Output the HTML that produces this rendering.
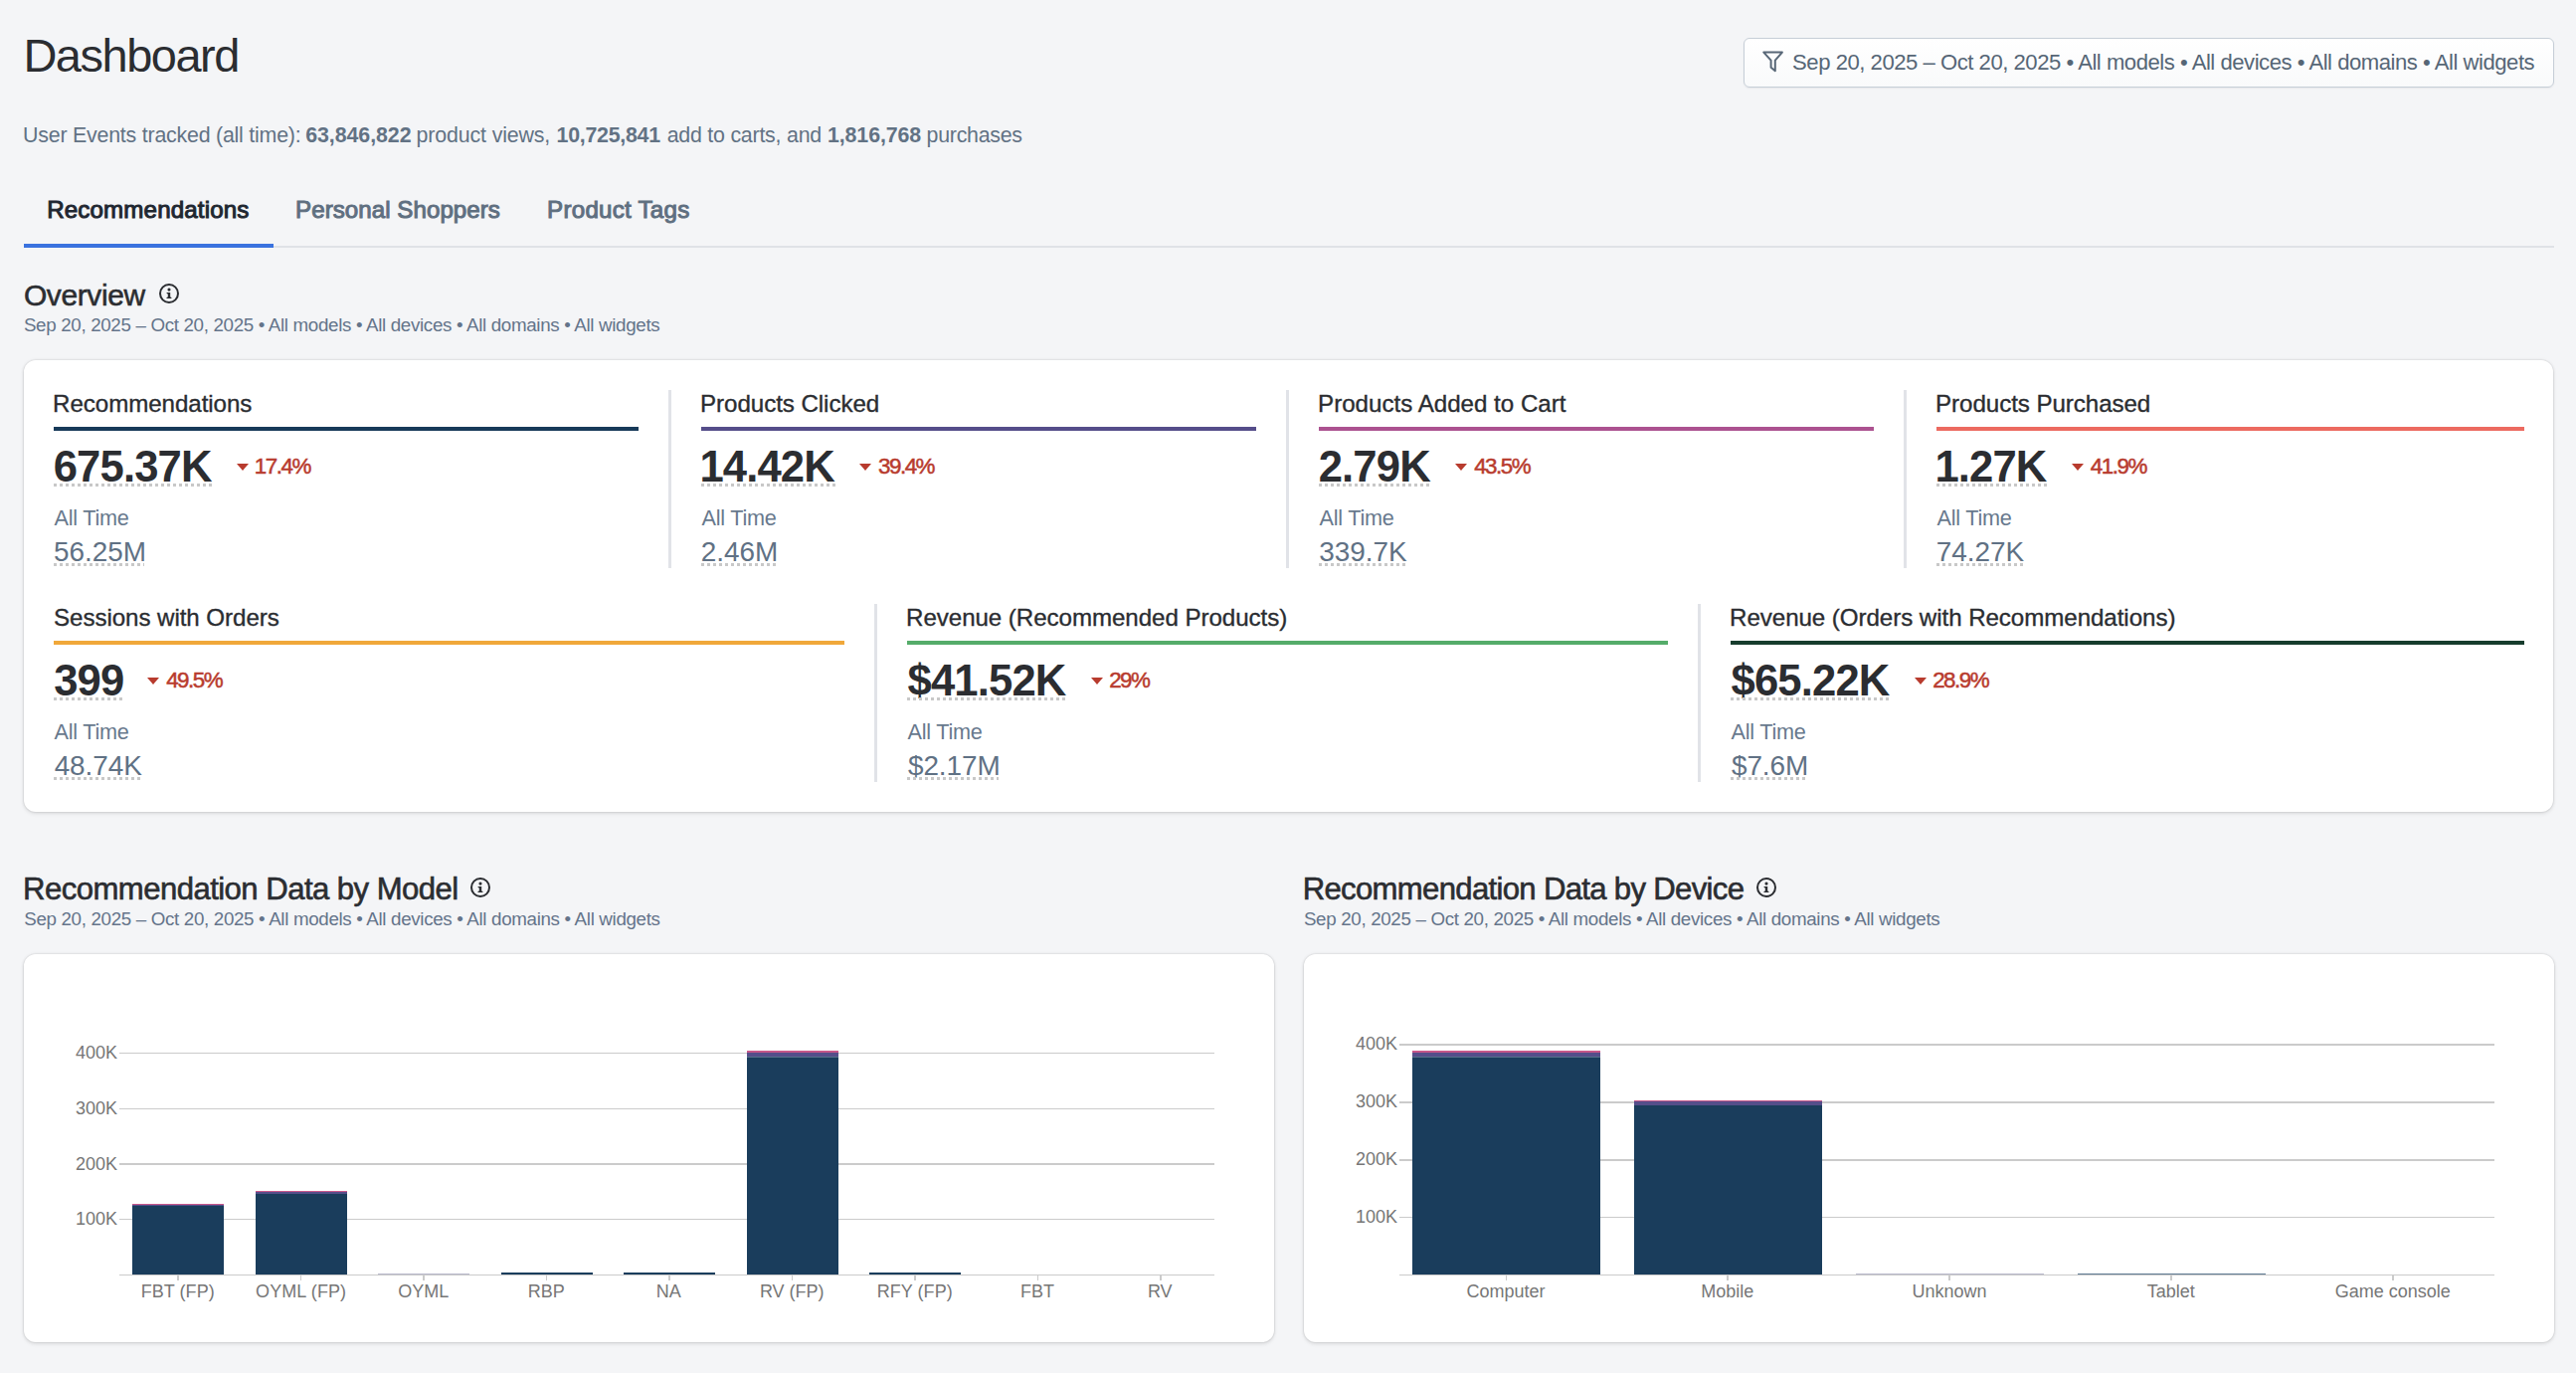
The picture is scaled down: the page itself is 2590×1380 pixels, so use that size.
<!DOCTYPE html>
<html><head><meta charset="utf-8"><title>Dashboard</title>
<style>
html,body{margin:0;padding:0;}
body{width:2590px;height:1380px;overflow:hidden;position:relative;background:#f4f5f7;font-family:"Liberation Sans",sans-serif;}
</style></head><body>
<div class="t" style="position:absolute;left:23.44px;top:32.69px;font-size:46.95px;line-height:46.95px;font-weight:400;letter-spacing:-1.467px;color:#2b2d31;white-space:nowrap">Dashboard</div>
<div class="t" style="position:absolute;left:23.10px;top:126.44px;font-size:21.37px;line-height:21.37px;font-weight:400;letter-spacing:-0.216px;color:#627284;white-space:nowrap">User Events tracked (all time):</div>
<div class="t" style="position:absolute;left:307.16px;top:126.44px;font-size:21.37px;line-height:21.37px;font-weight:700;letter-spacing:-0.056px;color:#627284;white-space:nowrap">63,846,822</div>
<div class="t" style="position:absolute;left:418.62px;top:126.44px;font-size:21.37px;line-height:21.37px;font-weight:400;letter-spacing:-0.144px;color:#627284;white-space:nowrap">product views,</div>
<div class="t" style="position:absolute;left:559.52px;top:126.44px;font-size:21.37px;line-height:21.37px;font-weight:700;letter-spacing:-0.264px;color:#627284;white-space:nowrap">10,725,841</div>
<div class="t" style="position:absolute;left:670.65px;top:126.44px;font-size:21.37px;line-height:21.37px;font-weight:400;letter-spacing:-0.223px;color:#627284;white-space:nowrap">add to carts, and</div>
<div class="t" style="position:absolute;left:832.02px;top:126.44px;font-size:21.37px;line-height:21.37px;font-weight:700;letter-spacing:-0.112px;color:#627284;white-space:nowrap">1,816,768</div>
<div class="t" style="position:absolute;left:931.62px;top:126.44px;font-size:21.37px;line-height:21.37px;font-weight:400;letter-spacing:-0.279px;color:#627284;white-space:nowrap">purchases</div>
<div style="position:absolute;left:1753px;top:38px;width:815px;height:50px;box-sizing:border-box;border:1.5px solid #c6ced7;border-radius:6px;background:linear-gradient(#ffffff,#f9fafb);box-shadow:0 1px 2px rgba(16,24,40,0.06)"></div>
<svg style="position:absolute;left:1770px;top:50px" width="26" height="25" viewBox="0 0 26 25"><path d="M3.3 2.6 H21.9 L14.8 10.6 V21.3 L10.6 17.8 V10.6 Z" fill="none" stroke="#586777" stroke-width="2" stroke-linejoin="round"/></svg>
<div class="t" style="position:absolute;left:1802.12px;top:51.82px;font-size:22.09px;line-height:22.09px;font-weight:400;letter-spacing:-0.469px;color:#566676;white-space:nowrap">Sep 20, 2025 – Oct 20, 2025 • All models • All devices • All domains • All widgets</div>
<div style="position:absolute;left:24.00px;top:247.00px;width:2544.00px;height:2.00px;background:#dfe2e7;"></div>
<div style="position:absolute;left:24.00px;top:245.00px;width:251.00px;height:4.00px;background:#3a72df;"></div>
<div class="t" style="position:absolute;left:47.17px;top:199.19px;font-size:24.13px;line-height:24.13px;font-weight:400;letter-spacing:0.151px;color:#1f2731;-webkit-text-stroke:1.0px #1f2731;white-space:nowrap">Recommendations</div>
<div class="t" style="position:absolute;left:297.07px;top:199.19px;font-size:24.13px;line-height:24.13px;font-weight:400;letter-spacing:0.041px;color:#5f6f80;-webkit-text-stroke:1.0px #5f6f80;white-space:nowrap">Personal Shoppers</div>
<div class="t" style="position:absolute;left:550.07px;top:199.19px;font-size:24.13px;line-height:24.13px;font-weight:400;letter-spacing:0.258px;color:#5f6f80;-webkit-text-stroke:1.0px #5f6f80;white-space:nowrap">Product Tags</div>
<div class="t" style="position:absolute;left:23.90px;top:282.15px;font-size:29.94px;line-height:29.94px;font-weight:400;letter-spacing:-0.358px;color:#2b2d31;-webkit-text-stroke:0.55px #2b2d31;white-space:nowrap">Overview</div>
<svg style="position:absolute;left:158.50px;top:284.20px" width="22" height="22" viewBox="-11 -11 22 22"><circle cx="0" cy="0" r="9" fill="none" stroke="#2b2d31" stroke-width="2"/><circle cx="0" cy="-3.9" r="1.55" fill="#2b2d31"/><path d="M-2.4 -1.0 H1.2 V3.5 L2.4 4.1 V5.1 H-2.5 V4.1 L-1.2 3.5 V0.5 L-2.4 0.1 Z" fill="#2b2d31"/></svg>
<div class="t" style="position:absolute;left:23.95px;top:317.66px;font-size:18.75px;line-height:18.75px;font-weight:400;letter-spacing:-0.327px;color:#64748a;white-space:nowrap">Sep 20, 2025 – Oct 20, 2025 • All models • All devices • All domains • All widgets</div>
<div style="position:absolute;left:24px;top:362px;width:2543px;height:454px;background:#fff;border-radius:12px;box-shadow:0 0 0 1px rgba(0,0,0,0.03),0 0 3px 1px rgba(0,0,0,0.05),0 2px 4px rgba(0,0,0,0.09)"></div>
<div style="position:absolute;left:672.00px;top:392.00px;width:3.00px;height:179.00px;background:#e1e3e8;"></div>
<div style="position:absolute;left:1293.00px;top:392.00px;width:3.00px;height:179.00px;background:#e1e3e8;"></div>
<div style="position:absolute;left:1914.00px;top:392.00px;width:3.00px;height:179.00px;background:#e1e3e8;"></div>
<div style="position:absolute;left:879.00px;top:607.00px;width:3.00px;height:179.00px;background:#e1e3e8;"></div>
<div style="position:absolute;left:1707.00px;top:607.00px;width:3.00px;height:179.00px;background:#e1e3e8;"></div>
<div class="t" style="position:absolute;left:53.07px;top:394.09px;font-size:24.13px;line-height:24.13px;font-weight:400;letter-spacing:-0.061px;color:#2b2d31;-webkit-text-stroke:0.35px #2b2d31;white-space:nowrap">Recommendations</div>
<div style="position:absolute;left:54.00px;top:429.00px;width:588.00px;height:4.00px;background:#173a59;"></div>
<div class="t" style="position:absolute;left:53.69px;top:447.54px;font-size:43.60px;line-height:43.60px;font-weight:700;letter-spacing:-0.837px;color:#2b2d31;white-space:nowrap">675.37K</div>
<div style="position:absolute;left:54.00px;top:486.00px;width:159.40px;height:3.00px;background:repeating-linear-gradient(to right,#c8c8c8 0,#c8c8c8 3px,transparent 3px,transparent 6px);"></div>
<svg style="position:absolute;left:237.90px;top:466.30px" width="12" height="7" viewBox="0 0 12 7"><path d="M0 0 H12 L6 7 Z" fill="#b83b2e"/></svg>
<div class="t" style="position:absolute;left:255.83px;top:457.87px;font-size:22.38px;line-height:22.38px;font-weight:400;letter-spacing:-1.482px;color:#b83b2e;-webkit-text-stroke:0.5px #b83b2e;white-space:nowrap">17.4%</div>
<div class="t" style="position:absolute;left:54.60px;top:510.19px;font-size:21.66px;line-height:21.66px;font-weight:400;letter-spacing:-0.254px;color:#68798d;white-space:nowrap">All Time</div>
<div class="t" style="position:absolute;left:54.08px;top:540.88px;font-size:27.91px;line-height:27.91px;font-weight:400;letter-spacing:-0.048px;color:#607184;white-space:nowrap">56.25M</div>
<div style="position:absolute;left:54.00px;top:566.00px;width:90.90px;height:3.00px;background:repeating-linear-gradient(to right,#c8c8c8 0,#c8c8c8 3px,transparent 3px,transparent 6px);"></div>
<div class="t" style="position:absolute;left:704.07px;top:394.09px;font-size:24.13px;line-height:24.13px;font-weight:400;letter-spacing:-0.061px;color:#2b2d31;-webkit-text-stroke:0.35px #2b2d31;white-space:nowrap">Products Clicked</div>
<div style="position:absolute;left:705.00px;top:429.00px;width:558.00px;height:4.00px;background:#554d8a;"></div>
<div class="t" style="position:absolute;left:703.38px;top:447.54px;font-size:43.60px;line-height:43.60px;font-weight:700;letter-spacing:-0.838px;color:#2b2d31;white-space:nowrap">14.42K</div>
<div style="position:absolute;left:705.00px;top:486.00px;width:134.68px;height:3.00px;background:repeating-linear-gradient(to right,#c8c8c8 0,#c8c8c8 3px,transparent 3px,transparent 6px);"></div>
<svg style="position:absolute;left:864.18px;top:466.30px" width="12" height="7" viewBox="0 0 12 7"><path d="M0 0 H12 L6 7 Z" fill="#b83b2e"/></svg>
<div class="t" style="position:absolute;left:883.01px;top:457.87px;font-size:22.38px;line-height:22.38px;font-weight:400;letter-spacing:-1.482px;color:#b83b2e;-webkit-text-stroke:0.5px #b83b2e;white-space:nowrap">39.4%</div>
<div class="t" style="position:absolute;left:705.60px;top:510.19px;font-size:21.66px;line-height:21.66px;font-weight:400;letter-spacing:-0.254px;color:#68798d;white-space:nowrap">All Time</div>
<div class="t" style="position:absolute;left:704.80px;top:540.88px;font-size:27.91px;line-height:27.91px;font-weight:400;letter-spacing:-0.046px;color:#607184;white-space:nowrap">2.46M</div>
<div style="position:absolute;left:705.00px;top:566.00px;width:75.15px;height:3.00px;background:repeating-linear-gradient(to right,#c8c8c8 0,#c8c8c8 3px,transparent 3px,transparent 6px);"></div>
<div class="t" style="position:absolute;left:1325.07px;top:394.09px;font-size:24.13px;line-height:24.13px;font-weight:400;letter-spacing:0.001px;color:#2b2d31;-webkit-text-stroke:0.35px #2b2d31;white-space:nowrap">Products Added to Cart</div>
<div style="position:absolute;left:1326.00px;top:429.00px;width:558.00px;height:4.00px;background:#ac5290;"></div>
<div class="t" style="position:absolute;left:1325.69px;top:447.54px;font-size:43.60px;line-height:43.60px;font-weight:700;letter-spacing:-0.839px;color:#2b2d31;white-space:nowrap">2.79K</div>
<div style="position:absolute;left:1326.00px;top:486.00px;width:112.58px;height:3.00px;background:repeating-linear-gradient(to right,#c8c8c8 0,#c8c8c8 3px,transparent 3px,transparent 6px);"></div>
<svg style="position:absolute;left:1463.08px;top:466.30px" width="12" height="7" viewBox="0 0 12 7"><path d="M0 0 H12 L6 7 Z" fill="#b83b2e"/></svg>
<div class="t" style="position:absolute;left:1482.14px;top:457.87px;font-size:22.38px;line-height:22.38px;font-weight:400;letter-spacing:-1.482px;color:#b83b2e;-webkit-text-stroke:0.5px #b83b2e;white-space:nowrap">43.5%</div>
<div class="t" style="position:absolute;left:1326.60px;top:510.19px;font-size:21.66px;line-height:21.66px;font-weight:400;letter-spacing:-0.254px;color:#68798d;white-space:nowrap">All Time</div>
<div class="t" style="position:absolute;left:1326.36px;top:540.88px;font-size:27.91px;line-height:27.91px;font-weight:400;letter-spacing:-0.045px;color:#607184;white-space:nowrap">339.7K</div>
<div style="position:absolute;left:1326.00px;top:566.00px;width:88.39px;height:3.00px;background:repeating-linear-gradient(to right,#c8c8c8 0,#c8c8c8 3px,transparent 3px,transparent 6px);"></div>
<div class="t" style="position:absolute;left:1946.07px;top:394.09px;font-size:24.13px;line-height:24.13px;font-weight:400;letter-spacing:-0.060px;color:#2b2d31;-webkit-text-stroke:0.35px #2b2d31;white-space:nowrap">Products Purchased</div>
<div style="position:absolute;left:1947.00px;top:429.00px;width:591.00px;height:4.00px;background:#ec6a60;"></div>
<div class="t" style="position:absolute;left:1945.38px;top:447.54px;font-size:43.60px;line-height:43.60px;font-weight:700;letter-spacing:-0.839px;color:#2b2d31;white-space:nowrap">1.27K</div>
<div style="position:absolute;left:1947.00px;top:486.00px;width:111.28px;height:3.00px;background:repeating-linear-gradient(to right,#c8c8c8 0,#c8c8c8 3px,transparent 3px,transparent 6px);"></div>
<svg style="position:absolute;left:2082.78px;top:466.30px" width="12" height="7" viewBox="0 0 12 7"><path d="M0 0 H12 L6 7 Z" fill="#b83b2e"/></svg>
<div class="t" style="position:absolute;left:2101.83px;top:457.87px;font-size:22.38px;line-height:22.38px;font-weight:400;letter-spacing:-1.482px;color:#b83b2e;-webkit-text-stroke:0.5px #b83b2e;white-space:nowrap">41.9%</div>
<div class="t" style="position:absolute;left:1947.60px;top:510.19px;font-size:21.66px;line-height:21.66px;font-weight:400;letter-spacing:-0.254px;color:#68798d;white-space:nowrap">All Time</div>
<div class="t" style="position:absolute;left:1946.80px;top:540.88px;font-size:27.91px;line-height:27.91px;font-weight:400;letter-spacing:-0.045px;color:#607184;white-space:nowrap">74.27K</div>
<div style="position:absolute;left:1947.00px;top:566.00px;width:87.83px;height:3.00px;background:repeating-linear-gradient(to right,#c8c8c8 0,#c8c8c8 3px,transparent 3px,transparent 6px);"></div>
<div class="t" style="position:absolute;left:54.03px;top:609.09px;font-size:24.13px;line-height:24.13px;font-weight:400;letter-spacing:-0.060px;color:#2b2d31;-webkit-text-stroke:0.35px #2b2d31;white-space:nowrap">Sessions with Orders</div>
<div style="position:absolute;left:54.00px;top:644.00px;width:795.00px;height:4.00px;background:#f0a83a;"></div>
<div class="t" style="position:absolute;left:54.13px;top:662.54px;font-size:43.60px;line-height:43.60px;font-weight:700;letter-spacing:-0.842px;color:#2b2d31;white-space:nowrap">399</div>
<div style="position:absolute;left:54.00px;top:701.00px;width:69.62px;height:3.00px;background:repeating-linear-gradient(to right,#c8c8c8 0,#c8c8c8 3px,transparent 3px,transparent 6px);"></div>
<svg style="position:absolute;left:148.12px;top:681.30px" width="12" height="7" viewBox="0 0 12 7"><path d="M0 0 H12 L6 7 Z" fill="#b83b2e"/></svg>
<div class="t" style="position:absolute;left:167.17px;top:672.87px;font-size:22.38px;line-height:22.38px;font-weight:400;letter-spacing:-1.482px;color:#b83b2e;-webkit-text-stroke:0.5px #b83b2e;white-space:nowrap">49.5%</div>
<div class="t" style="position:absolute;left:54.60px;top:725.19px;font-size:21.66px;line-height:21.66px;font-weight:400;letter-spacing:-0.254px;color:#68798d;white-space:nowrap">All Time</div>
<div class="t" style="position:absolute;left:54.64px;top:755.88px;font-size:27.91px;line-height:27.91px;font-weight:400;letter-spacing:-0.045px;color:#607184;white-space:nowrap">48.74K</div>
<div style="position:absolute;left:54.00px;top:781.00px;width:88.67px;height:3.00px;background:repeating-linear-gradient(to right,#c8c8c8 0,#c8c8c8 3px,transparent 3px,transparent 6px);"></div>
<div class="t" style="position:absolute;left:911.07px;top:609.09px;font-size:24.13px;line-height:24.13px;font-weight:400;letter-spacing:-0.059px;color:#2b2d31;-webkit-text-stroke:0.35px #2b2d31;white-space:nowrap">Revenue (Recommended Products)</div>
<div style="position:absolute;left:912.00px;top:644.00px;width:765.00px;height:4.00px;background:#55ac6a;"></div>
<div class="t" style="position:absolute;left:912.56px;top:662.54px;font-size:43.60px;line-height:43.60px;font-weight:700;letter-spacing:-0.837px;color:#2b2d31;white-space:nowrap">$41.52K</div>
<div style="position:absolute;left:912.00px;top:701.00px;width:160.27px;height:3.00px;background:repeating-linear-gradient(to right,#c8c8c8 0,#c8c8c8 3px,transparent 3px,transparent 6px);"></div>
<svg style="position:absolute;left:1096.77px;top:681.30px" width="12" height="7" viewBox="0 0 12 7"><path d="M0 0 H12 L6 7 Z" fill="#b83b2e"/></svg>
<div class="t" style="position:absolute;left:1115.15px;top:672.87px;font-size:22.38px;line-height:22.38px;font-weight:400;letter-spacing:-1.481px;color:#b83b2e;-webkit-text-stroke:0.5px #b83b2e;white-space:nowrap">29%</div>
<div class="t" style="position:absolute;left:912.60px;top:725.19px;font-size:21.66px;line-height:21.66px;font-weight:400;letter-spacing:-0.254px;color:#68798d;white-space:nowrap">All Time</div>
<div class="t" style="position:absolute;left:912.92px;top:755.88px;font-size:27.91px;line-height:27.91px;font-weight:400;letter-spacing:-0.048px;color:#607184;white-space:nowrap">$2.17M</div>
<div style="position:absolute;left:912.00px;top:781.00px;width:91.74px;height:3.00px;background:repeating-linear-gradient(to right,#c8c8c8 0,#c8c8c8 3px,transparent 3px,transparent 6px);"></div>
<div class="t" style="position:absolute;left:1739.07px;top:609.09px;font-size:24.13px;line-height:24.13px;font-weight:400;letter-spacing:-0.060px;color:#2b2d31;-webkit-text-stroke:0.35px #2b2d31;white-space:nowrap">Revenue (Orders with Recommendations)</div>
<div style="position:absolute;left:1740.00px;top:644.00px;width:798.00px;height:4.00px;background:#173d2d;"></div>
<div class="t" style="position:absolute;left:1740.56px;top:662.54px;font-size:43.60px;line-height:43.60px;font-weight:700;letter-spacing:-0.837px;color:#2b2d31;white-space:nowrap">$65.22K</div>
<div style="position:absolute;left:1740.00px;top:701.00px;width:160.27px;height:3.00px;background:repeating-linear-gradient(to right,#c8c8c8 0,#c8c8c8 3px,transparent 3px,transparent 6px);"></div>
<svg style="position:absolute;left:1924.77px;top:681.30px" width="12" height="7" viewBox="0 0 12 7"><path d="M0 0 H12 L6 7 Z" fill="#b83b2e"/></svg>
<div class="t" style="position:absolute;left:1943.15px;top:672.87px;font-size:22.38px;line-height:22.38px;font-weight:400;letter-spacing:-1.482px;color:#b83b2e;-webkit-text-stroke:0.5px #b83b2e;white-space:nowrap">28.9%</div>
<div class="t" style="position:absolute;left:1740.60px;top:725.19px;font-size:21.66px;line-height:21.66px;font-weight:400;letter-spacing:-0.254px;color:#68798d;white-space:nowrap">All Time</div>
<div class="t" style="position:absolute;left:1740.92px;top:755.88px;font-size:27.91px;line-height:27.91px;font-weight:400;letter-spacing:-0.046px;color:#607184;white-space:nowrap">$7.6M</div>
<div style="position:absolute;left:1740.00px;top:781.00px;width:76.26px;height:3.00px;background:repeating-linear-gradient(to right,#c8c8c8 0,#c8c8c8 3px,transparent 3px,transparent 6px);"></div>
<div class="t" style="position:absolute;left:23.01px;top:878.46px;font-size:31.10px;line-height:31.10px;font-weight:400;letter-spacing:-0.541px;color:#2b2d31;-webkit-text-stroke:0.6px #2b2d31;white-space:nowrap">Recommendation Data by Model</div>
<svg style="position:absolute;left:472.10px;top:881.30px" width="22" height="22" viewBox="-11 -11 22 22"><circle cx="0" cy="0" r="9" fill="none" stroke="#2b2d31" stroke-width="2"/><circle cx="0" cy="-3.9" r="1.55" fill="#2b2d31"/><path d="M-2.4 -1.0 H1.2 V3.5 L2.4 4.1 V5.1 H-2.5 V4.1 L-1.2 3.5 V0.5 L-2.4 0.1 Z" fill="#2b2d31"/></svg>
<div class="t" style="position:absolute;left:24.25px;top:914.66px;font-size:18.75px;line-height:18.75px;font-weight:400;letter-spacing:-0.327px;color:#64748a;white-space:nowrap">Sep 20, 2025 – Oct 20, 2025 • All models • All devices • All domains • All widgets</div>
<div style="position:absolute;left:24px;top:959px;width:1257px;height:390px;background:#fff;border-radius:12px;box-shadow:0 0 0 1px rgba(0,0,0,0.03),0 0 3px 1px rgba(0,0,0,0.05),0 2px 4px rgba(0,0,0,0.09)"></div>
<div style="position:absolute;left:120.00px;top:1057.90px;width:1101.00px;height:1.60px;background:#cbcbcb;"></div>
<div class="t" style="position:absolute;left:76.09px;top:1049.10px;font-size:18.00px;line-height:18.00px;font-weight:400;letter-spacing:-0.001px;color:#767676;white-space:nowrap">400K</div>
<div style="position:absolute;left:120.00px;top:1113.60px;width:1101.00px;height:1.60px;background:#cbcbcb;"></div>
<div class="t" style="position:absolute;left:76.09px;top:1104.80px;font-size:18.00px;line-height:18.00px;font-weight:400;letter-spacing:-0.001px;color:#767676;white-space:nowrap">300K</div>
<div style="position:absolute;left:120.00px;top:1169.30px;width:1101.00px;height:1.60px;background:#cbcbcb;"></div>
<div class="t" style="position:absolute;left:76.09px;top:1160.50px;font-size:18.00px;line-height:18.00px;font-weight:400;letter-spacing:-0.001px;color:#767676;white-space:nowrap">200K</div>
<div style="position:absolute;left:120.00px;top:1224.90px;width:1101.00px;height:1.60px;background:#cbcbcb;"></div>
<div class="t" style="position:absolute;left:76.09px;top:1216.10px;font-size:18.00px;line-height:18.00px;font-weight:400;letter-spacing:-0.001px;color:#767676;white-space:nowrap">100K</div>
<div style="position:absolute;left:120.00px;top:1280.70px;width:1101.00px;height:1.60px;background:#cbcbcb;"></div>
<div style="position:absolute;left:178.25px;top:1281.20px;width:1.50px;height:6.00px;background:#cbcbcb;"></div>
<div class="t" style="position:absolute;left:141.76px;top:1288.50px;font-size:18.00px;line-height:18.00px;font-weight:400;letter-spacing:0.041px;color:#767676;white-space:nowrap">FBT (FP)</div>
<div style="position:absolute;left:301.75px;top:1281.20px;width:1.50px;height:6.00px;background:#cbcbcb;"></div>
<div class="t" style="position:absolute;left:257.12px;top:1288.50px;font-size:18.00px;line-height:18.00px;font-weight:400;letter-spacing:0.074px;color:#767676;white-space:nowrap">OYML (FP)</div>
<div style="position:absolute;left:425.25px;top:1281.20px;width:1.50px;height:6.00px;background:#cbcbcb;"></div>
<div class="t" style="position:absolute;left:400.37px;top:1288.50px;font-size:18.00px;line-height:18.00px;font-weight:400;letter-spacing:-0.002px;color:#767676;white-space:nowrap">OYML</div>
<div style="position:absolute;left:548.75px;top:1281.20px;width:1.50px;height:6.00px;background:#cbcbcb;"></div>
<div class="t" style="position:absolute;left:530.70px;top:1288.50px;font-size:18.00px;line-height:18.00px;font-weight:400;letter-spacing:-0.005px;color:#767676;white-space:nowrap">RBP</div>
<div style="position:absolute;left:672.25px;top:1281.20px;width:1.50px;height:6.00px;background:#cbcbcb;"></div>
<div class="t" style="position:absolute;left:659.75px;top:1288.50px;font-size:18.00px;line-height:18.00px;font-weight:400;letter-spacing:-0.001px;color:#767676;white-space:nowrap">NA</div>
<div style="position:absolute;left:795.75px;top:1281.20px;width:1.50px;height:6.00px;background:#cbcbcb;"></div>
<div class="t" style="position:absolute;left:763.92px;top:1288.50px;font-size:18.00px;line-height:18.00px;font-weight:400;letter-spacing:-0.002px;color:#767676;white-space:nowrap">RV (FP)</div>
<div style="position:absolute;left:919.25px;top:1281.20px;width:1.50px;height:6.00px;background:#cbcbcb;"></div>
<div class="t" style="position:absolute;left:881.76px;top:1288.50px;font-size:18.00px;line-height:18.00px;font-weight:400;letter-spacing:0.040px;color:#767676;white-space:nowrap">RFY (FP)</div>
<div style="position:absolute;left:1042.75px;top:1281.20px;width:1.50px;height:6.00px;background:#cbcbcb;"></div>
<div class="t" style="position:absolute;left:1025.97px;top:1288.50px;font-size:18.00px;line-height:18.00px;font-weight:400;letter-spacing:-0.003px;color:#767676;white-space:nowrap">FBT</div>
<div style="position:absolute;left:1166.25px;top:1281.20px;width:1.50px;height:6.00px;background:#cbcbcb;"></div>
<div class="t" style="position:absolute;left:1153.91px;top:1288.50px;font-size:18.00px;line-height:18.00px;font-weight:400;letter-spacing:0.000px;color:#767676;white-space:nowrap">RV</div>
<div style="position:absolute;left:133.00px;top:1210.40px;width:92.00px;height:1.00px;background:#c8588a;"></div>
<div style="position:absolute;left:133.00px;top:1211.40px;width:92.00px;height:0.60px;background:#554e8a;"></div>
<div style="position:absolute;left:133.00px;top:1212.00px;width:92.00px;height:69.20px;background:#1a3d5c;"></div>
<div style="position:absolute;left:256.50px;top:1197.10px;width:92.00px;height:0.90px;background:#c8588a;"></div>
<div style="position:absolute;left:256.50px;top:1198.00px;width:92.00px;height:2.00px;background:#554e8a;"></div>
<div style="position:absolute;left:256.50px;top:1200.00px;width:92.00px;height:81.20px;background:#1a3d5c;"></div>
<div style="position:absolute;left:380.00px;top:1280.20px;width:92.00px;height:1.00px;background:#b9b9cc;"></div>
<div style="position:absolute;left:503.50px;top:1279.20px;width:92.00px;height:2.00px;background:#1a3d5c;"></div>
<div style="position:absolute;left:627.00px;top:1279.20px;width:92.00px;height:2.00px;background:#1a3d5c;"></div>
<div style="position:absolute;left:750.50px;top:1056.30px;width:92.00px;height:1.70px;background:#c8588a;"></div>
<div style="position:absolute;left:750.50px;top:1058.00px;width:92.00px;height:4.00px;background:#554e8a;"></div>
<div style="position:absolute;left:750.50px;top:1062.00px;width:92.00px;height:1.00px;background:#55708a;"></div>
<div style="position:absolute;left:750.50px;top:1063.00px;width:92.00px;height:218.20px;background:#1a3d5c;"></div>
<div style="position:absolute;left:874.00px;top:1279.20px;width:92.00px;height:2.00px;background:#1a3d5c;"></div>
<div class="t" style="position:absolute;left:1309.71px;top:878.46px;font-size:31.10px;line-height:31.10px;font-weight:400;letter-spacing:-0.677px;color:#2b2d31;-webkit-text-stroke:0.6px #2b2d31;white-space:nowrap">Recommendation Data by Device</div>
<svg style="position:absolute;left:1765.00px;top:881.30px" width="22" height="22" viewBox="-11 -11 22 22"><circle cx="0" cy="0" r="9" fill="none" stroke="#2b2d31" stroke-width="2"/><circle cx="0" cy="-3.9" r="1.55" fill="#2b2d31"/><path d="M-2.4 -1.0 H1.2 V3.5 L2.4 4.1 V5.1 H-2.5 V4.1 L-1.2 3.5 V0.5 L-2.4 0.1 Z" fill="#2b2d31"/></svg>
<div class="t" style="position:absolute;left:1310.95px;top:914.66px;font-size:18.75px;line-height:18.75px;font-weight:400;letter-spacing:-0.327px;color:#64748a;white-space:nowrap">Sep 20, 2025 – Oct 20, 2025 • All models • All devices • All domains • All widgets</div>
<div style="position:absolute;left:1311px;top:959px;width:1257px;height:390px;background:#fff;border-radius:12px;box-shadow:0 0 0 1px rgba(0,0,0,0.03),0 0 3px 1px rgba(0,0,0,0.05),0 2px 4px rgba(0,0,0,0.09)"></div>
<div style="position:absolute;left:1407.00px;top:1049.00px;width:1100.50px;height:1.60px;background:#cbcbcb;"></div>
<div class="t" style="position:absolute;left:1363.09px;top:1040.20px;font-size:18.00px;line-height:18.00px;font-weight:400;letter-spacing:-0.001px;color:#767676;white-space:nowrap">400K</div>
<div style="position:absolute;left:1407.00px;top:1107.00px;width:1100.50px;height:1.60px;background:#cbcbcb;"></div>
<div class="t" style="position:absolute;left:1363.09px;top:1098.20px;font-size:18.00px;line-height:18.00px;font-weight:400;letter-spacing:-0.001px;color:#767676;white-space:nowrap">300K</div>
<div style="position:absolute;left:1407.00px;top:1165.10px;width:1100.50px;height:1.60px;background:#cbcbcb;"></div>
<div class="t" style="position:absolute;left:1363.09px;top:1156.30px;font-size:18.00px;line-height:18.00px;font-weight:400;letter-spacing:-0.001px;color:#767676;white-space:nowrap">200K</div>
<div style="position:absolute;left:1407.00px;top:1222.90px;width:1100.50px;height:1.60px;background:#cbcbcb;"></div>
<div class="t" style="position:absolute;left:1363.09px;top:1214.10px;font-size:18.00px;line-height:18.00px;font-weight:400;letter-spacing:-0.001px;color:#767676;white-space:nowrap">100K</div>
<div style="position:absolute;left:1407.00px;top:1280.80px;width:1100.50px;height:1.60px;background:#cbcbcb;"></div>
<div style="position:absolute;left:1513.55px;top:1281.30px;width:1.50px;height:6.00px;background:#cbcbcb;"></div>
<div class="t" style="position:absolute;left:1474.45px;top:1288.50px;font-size:18.00px;line-height:18.00px;font-weight:400;letter-spacing:0.000px;color:#767676;white-space:nowrap">Computer</div>
<div style="position:absolute;left:1736.45px;top:1281.30px;width:1.50px;height:6.00px;background:#cbcbcb;"></div>
<div class="t" style="position:absolute;left:1710.29px;top:1288.50px;font-size:18.00px;line-height:18.00px;font-weight:400;letter-spacing:-0.002px;color:#767676;white-space:nowrap">Mobile</div>
<div style="position:absolute;left:1959.35px;top:1281.30px;width:1.50px;height:6.00px;background:#cbcbcb;"></div>
<div class="t" style="position:absolute;left:1922.45px;top:1288.50px;font-size:18.00px;line-height:18.00px;font-weight:400;letter-spacing:-0.001px;color:#767676;white-space:nowrap">Unknown</div>
<div style="position:absolute;left:2182.25px;top:1281.30px;width:1.50px;height:6.00px;background:#cbcbcb;"></div>
<div class="t" style="position:absolute;left:2158.78px;top:1288.50px;font-size:18.00px;line-height:18.00px;font-weight:400;letter-spacing:-0.002px;color:#767676;white-space:nowrap">Tablet</div>
<div style="position:absolute;left:2405.15px;top:1281.30px;width:1.50px;height:6.00px;background:#cbcbcb;"></div>
<div class="t" style="position:absolute;left:2347.75px;top:1288.50px;font-size:18.00px;line-height:18.00px;font-weight:400;letter-spacing:-0.001px;color:#767676;white-space:nowrap">Game console</div>
<div style="position:absolute;left:1419.80px;top:1056.30px;width:189.00px;height:1.70px;background:#c8588a;"></div>
<div style="position:absolute;left:1419.80px;top:1058.00px;width:189.00px;height:4.00px;background:#554e8a;"></div>
<div style="position:absolute;left:1419.80px;top:1062.00px;width:189.00px;height:1.00px;background:#55708a;"></div>
<div style="position:absolute;left:1419.80px;top:1063.00px;width:189.00px;height:218.30px;background:#1a3d5c;"></div>
<div style="position:absolute;left:1642.70px;top:1106.00px;width:189.00px;height:1.00px;background:#c8588a;"></div>
<div style="position:absolute;left:1642.70px;top:1107.00px;width:189.00px;height:4.00px;background:#554e8a;"></div>
<div style="position:absolute;left:1642.70px;top:1111.00px;width:189.00px;height:170.30px;background:#1a3d5c;"></div>
<div style="position:absolute;left:1865.60px;top:1280.30px;width:189.00px;height:1.00px;background:#b9b9cc;"></div>
<div style="position:absolute;left:2088.50px;top:1279.80px;width:189.00px;height:1.50px;background:#5f7a93;"></div>
</body></html>
